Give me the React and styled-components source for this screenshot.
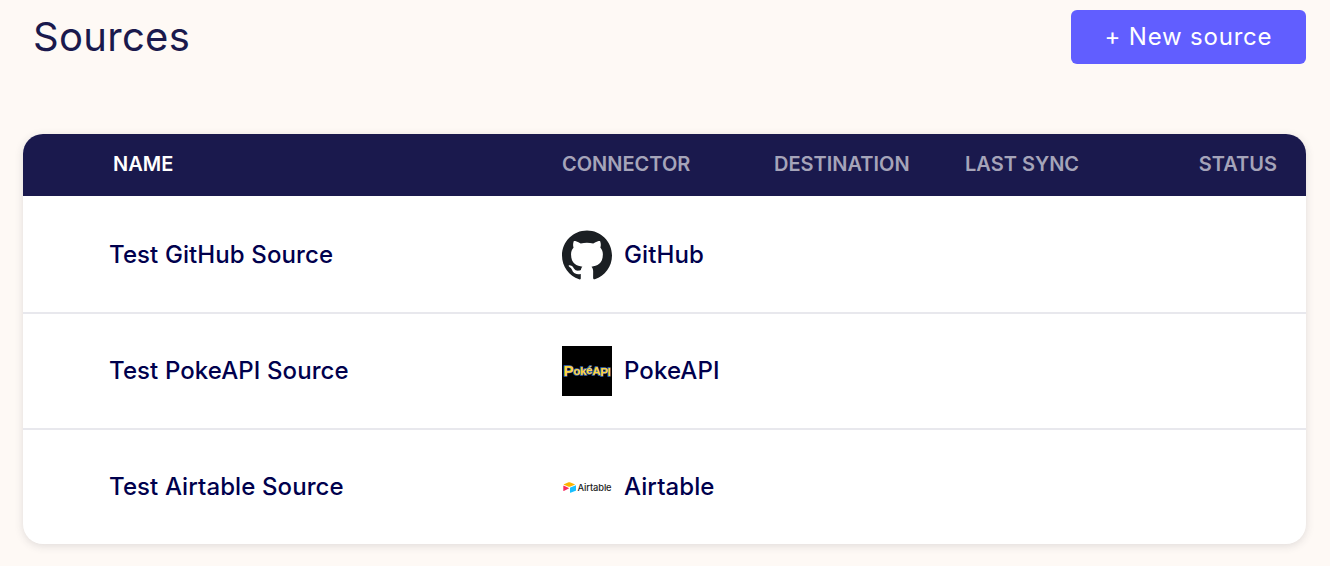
import React from "react";
import styled, { createGlobalStyle } from "styled-components";
import { SiGithub } from "react-icons/si";

const GlobalStyle = createGlobalStyle`
  html, body {
    margin: 0;
    padding: 0;
    background: #fef9f5;
    font-family: "Inter", "Liberation Sans", sans-serif;
  }
`;

const Page = styled.div`
  width: 1330px;
  height: 566px;
  box-sizing: border-box;
  padding: 10px 24px 0 23px;
  overflow: hidden;
`;

const TopBar = styled.div`
  display: flex;
  justify-content: space-between;
  align-items: flex-start;
  height: 124px;
`;

const Title = styled.h1`
  margin: 0;
  padding-left: 10px;
  font-size: 40px;
  line-height: 54px;
  font-weight: 400;
  letter-spacing: 0.3px;
  color: #1a194d;
`;

const NewButton = styled.button`
  width: 235px;
  height: 54px;
  padding: 0 0 2px;
  border: none;
  border-radius: 6px;
  background: #615eff;
  color: #fff;
  font-family: inherit;
  font-size: 24px;
  font-weight: 400;
  letter-spacing: 0.8px;
`;

const Card = styled.div`
  width: 1283px;
  height: 410px;
  border-radius: 20px;
  background: #fff;
  overflow: hidden;
  box-shadow: 0 2px 8px rgba(53, 53, 66, 0.15);
`;

const columns = "539px 212px 191px 1fr auto";

const HeaderRow = styled.div`
  display: grid;
  grid-template-columns: ${columns};
  align-items: center;
  height: 62px;
  margin-bottom: 2px;
  padding: 0 29px 2px 0;
  box-sizing: border-box;
  background: #1a194d;
`;

const HeaderCell = styled.div`
  padding-left: ${(p) => p.$inset || 0}px;
  font-size: 20px;
  font-weight: 600;
  text-transform: uppercase;
  color: ${(p) => (p.$active ? "#fff" : "#a5a4b9")};
`;

const Row = styled.div`
  display: grid;
  grid-template-columns: ${columns};
  align-items: center;
  height: 116px;
  box-sizing: border-box;
  border-bottom: 2px solid ${(p) => (p.$last ? "transparent" : "#e8e8ed")};
  color: #00004d;
  font-size: 24px;
  font-weight: 500;
  letter-spacing: 0.1px;
`;

const NameCell = styled.div`
  padding: 0 0 2px 86px;
`;

const ConnectorCell = styled.div`
  display: flex;
  align-items: center;
  gap: 12px;
`;

const ConnectorName = styled.span`
  padding-bottom: 2px;
`;

const LogoBox = styled.div`
  width: 50px;
  height: 50px;
  display: flex;
  align-items: center;
  justify-content: center;
  flex: none;
  background: ${(p) => p.$bg || "transparent"};
  color: #1b1f23;
`;

const PokeText = styled.text`
  font-family: "Liberation Sans", sans-serif;
  font-size: 11.5px;
  font-weight: 700;
  letter-spacing: -0.3px;
  fill: #ffd53d;
  stroke: #3f6cb3;
  stroke-width: 1.3;
  paint-order: stroke;
`;

const PokeCap = styled.tspan`
  font-size: 15px;
`;

const AirtableMark = styled.div`
  display: flex;
  align-items: center;
  gap: 2px;
`;

const AirtableWord = styled.span`
  font-size: 9.3px;
  font-weight: 500;
  letter-spacing: -0.1px;
  color: #222;
`;

const PokeLogo = () => (
  <LogoBox $bg="#000">
    <svg width="50" height="50" viewBox="0 0 50 50">
      <PokeText x="25" y="30" textAnchor="middle">
        <PokeCap>P</PokeCap>
        <tspan dy="-1">ok</tspan>
        <tspan dy="-1">é</tspan>
        <tspan dy="1">A</tspan>
        <tspan dy="1">PI</tspan>
      </PokeText>
    </svg>
  </LogoBox>
);

const AirtableLogo = () => (
  <LogoBox>
    <AirtableMark>
      <svg width="13" height="11" viewBox="0 0 13 11">
        <path d="M5.6.3.9 2.2c-.3.1-.3.5 0 .6l4.7 1.900c.4.2.9.2 1.300 0l4.800-1.900c.3-.1.3-.5 0-.6L6.900.3c-.4-.2-.9-.2-1.300 0z" fill="#fcb400" />
        <path d="M7 5.800v4.600c0 .2.200.4.500.300l5.200-2c.2-.1.300-.2.300-.4V3.700c0-.2-.2-.4-.5-.3L7.300 5.400c-.2.100-.3.200-.3.400z" fill="#18bfff" />
        <path d="M5.800 6 1 3.700c-.4-.1-.7.100-.7.400v4.500c0 .2.100.3.200.4.100 0 .200.100.3 0L5.800 6.500c.2-.1.200-.4 0-.5z" fill="#f82b60" />
      </svg>
      <AirtableWord>Airtable</AirtableWord>
    </AirtableMark>
  </LogoBox>
);

const sources = [
  {
    name: "Test GitHub Source",
    connector: "GitHub",
    logo: (
      <LogoBox>
        <SiGithub size={50} />
      </LogoBox>
    ),
  },
  { name: "Test PokeAPI Source", connector: "PokeAPI", logo: <PokeLogo /> },
  { name: "Test Airtable Source", connector: "Airtable", logo: <AirtableLogo />, last: true },
];

export default function App() {
  return (
    <>
      <GlobalStyle />
      <Page>
        <TopBar>
          <Title>Sources</Title>
          <NewButton>+ New source</NewButton>
        </TopBar>
        <Card>
          <HeaderRow>
            <HeaderCell $active $inset={90}>
              Name
            </HeaderCell>
            <HeaderCell>Connector</HeaderCell>
            <HeaderCell>Destination</HeaderCell>
            <HeaderCell>Last sync</HeaderCell>
            <HeaderCell>Status</HeaderCell>
          </HeaderRow>
          {sources.map((s) => (
            <Row key={s.name} $last={s.last}>
              <NameCell>{s.name}</NameCell>
              <ConnectorCell>
                {s.logo}
                <ConnectorName>{s.connector}</ConnectorName>
              </ConnectorCell>
            </Row>
          ))}
        </Card>
      </Page>
    </>
  );
}
